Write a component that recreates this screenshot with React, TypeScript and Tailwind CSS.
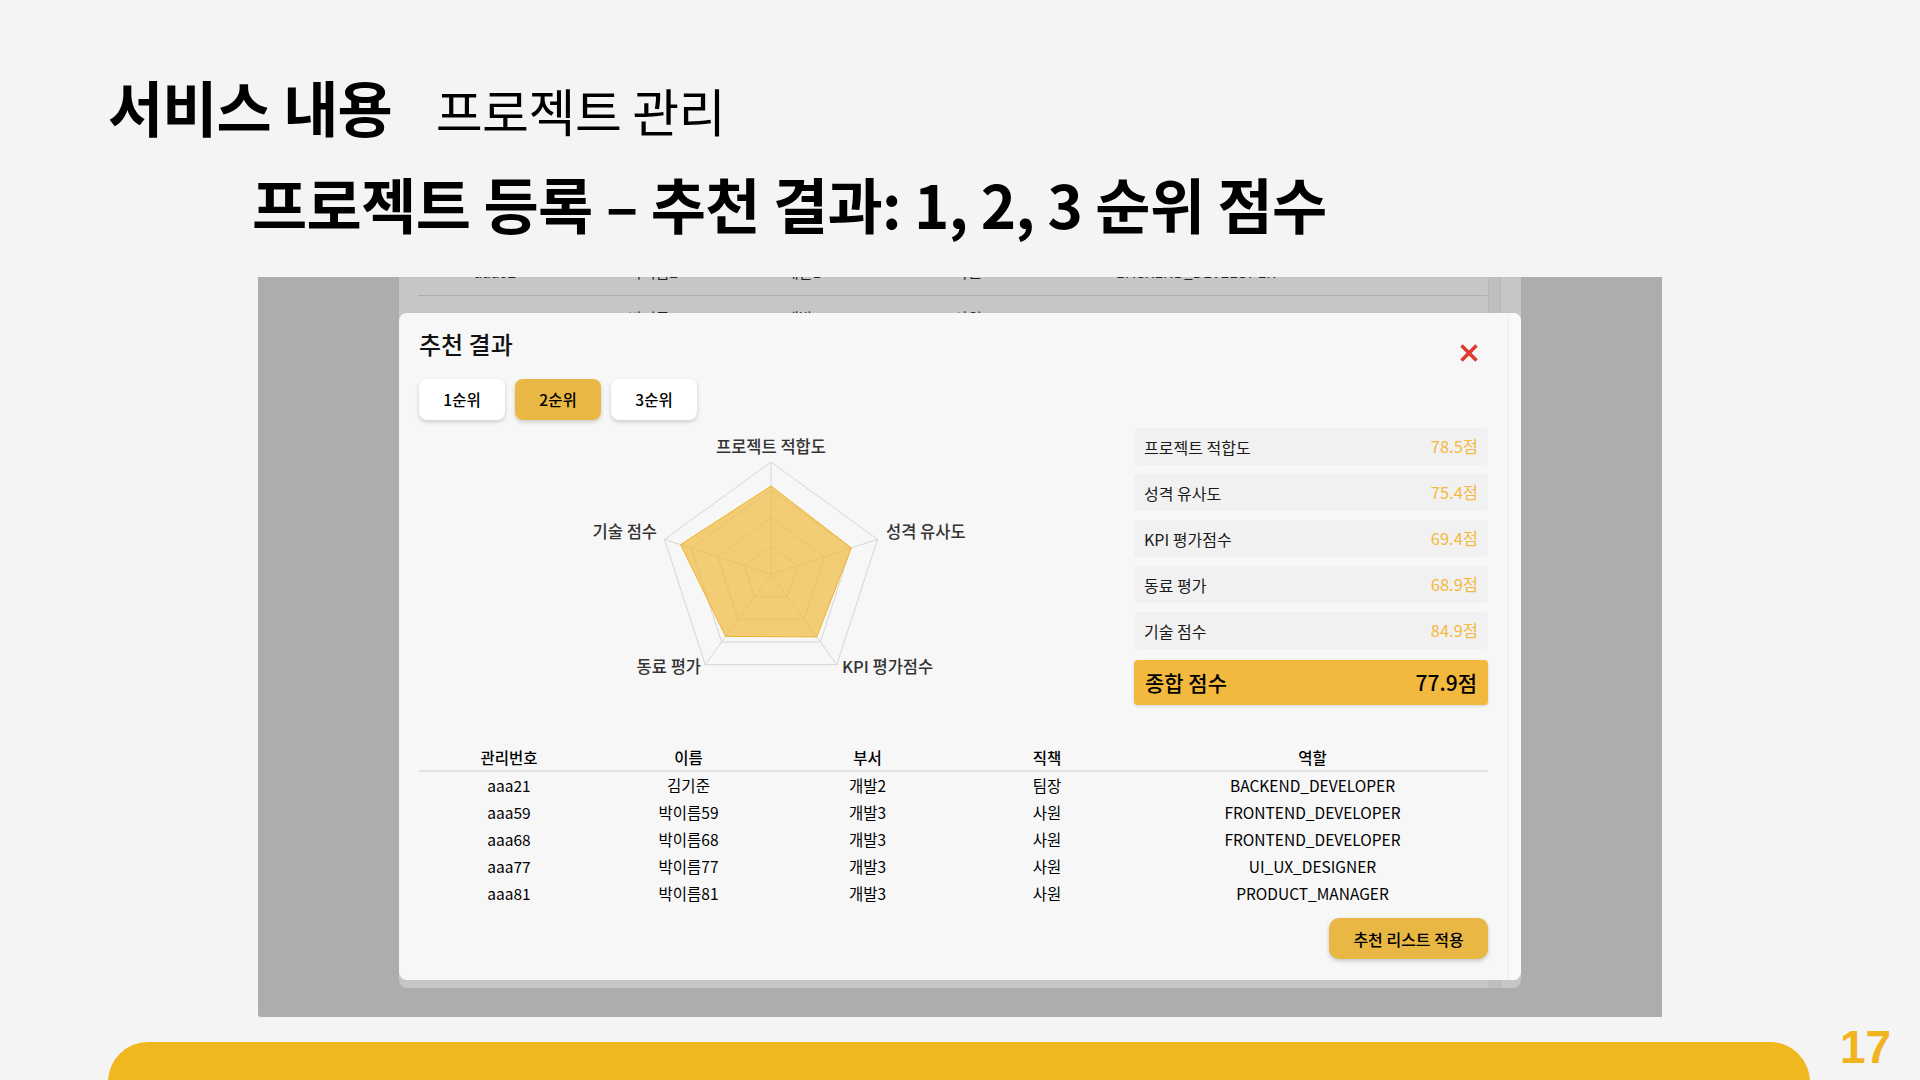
import React from 'react';

const axes = [
  { label: '프로젝트 적합도', value: 78.5 },
  { label: '성격 유사도', value: 75.4 },
  { label: 'KPI 평가점수', value: 69.4 },
  { label: '동료 평가', value: 68.9 },
  { label: '기술 점수', value: 84.9 },
];

const members = [
  { id: 'aaa21', name: '김기준', dept: '개발2', rank: '팀장', role: 'BACKEND_DEVELOPER' },
  { id: 'aaa59', name: '박이름59', dept: '개발3', rank: '사원', role: 'FRONTEND_DEVELOPER' },
  { id: 'aaa68', name: '박이름68', dept: '개발3', rank: '사원', role: 'FRONTEND_DEVELOPER' },
  { id: 'aaa77', name: '박이름77', dept: '개발3', rank: '사원', role: 'UI_UX_DESIGNER' },
  { id: 'aaa81', name: '박이름81', dept: '개발3', rank: '사원', role: 'PRODUCT_MANAGER' },
];

const CX = 352;
const CY = 146;
const R = 112;

const pt = (i: number, r: number) => {
  const a = ((-90 + 72 * i) * Math.PI) / 180;
  return [CX + r * Math.cos(a), CY + r * Math.sin(a)];
};

const ring = (f: number) =>
  [0, 1, 2, 3, 4].map((i) => pt(i, R * f).map((n) => n.toFixed(1)).join(',')).join(' ');

const RadarChart: React.FC = () => {
  const data = axes.map((a, i) => pt(i, (R * a.value) / 100).map((n) => n.toFixed(1)).join(',')).join(' ');
  // label anchors, tuned by eye
  const labels = [
    { x: 352, y: 18, anchor: 'middle' },
    { x: 467, y: 103, anchor: 'start' },
    { x: 423, y: 238, anchor: 'start' },
    { x: 282, y: 238, anchor: 'end' },
    { x: 238, y: 103, anchor: 'end' },
  ];
  return (
    <svg width="715" height="277" className="block shrink-0">
      {[0.25, 0.5, 0.75, 1].map((f) => (
        <polygon key={f} points={ring(f)} fill="none" stroke="#d6d6d6" strokeWidth="1" />
      ))}
      {[0, 1, 2, 3, 4].map((i) => {
        const [x, y] = pt(i, R);
        return <line key={i} x1={CX} y1={CY} x2={x} y2={y} stroke="#d6d6d6" strokeWidth="1" />;
      })}
      <polygon points={data} fill="#f0bb3f" fillOpacity="0.7" stroke="#f0b429" strokeWidth="1" />
      {axes.map((a, i) => (
        <text
          key={a.label}
          x={labels[i].x}
          y={labels[i].y}
          textAnchor={labels[i].anchor as any}
          dominantBaseline="central"
          fontSize="16.5"
          fontWeight="500"
          fill="#333"
          fontFamily="'Noto Sans CJK KR', 'Noto Sans', sans-serif"
        >
          {a.label}
        </text>
      ))}
    </svg>
  );
};

const App: React.FC = () => {
  return (
    <div className="w-[1920px] h-[1080px] bg-[#f4f4f4] overflow-hidden font-['Noto_Sans_CJK_KR','Noto_Sans',sans-serif] text-black">
      {/* slide heading */}
      <div className="pl-[108px] pt-[76px] flex items-baseline gap-[44px] leading-none">
        <h1 className="text-[60px] font-bold tracking-[-1px]">서비스 내용</h1>
        <span className="text-[51px] font-normal tracking-[-0.5px]">프로젝트 관리</span>
      </div>
      <h2 className="pl-[252px] mt-[37px] text-[60px] font-bold leading-none tracking-[-0.6px]">
        프로젝트 등록 – 추천 결과: 1, 2, 3 순위 점수
      </h2>

      {/* screenshot */}
      <div className="mt-[44px] ml-[258px] w-[1404px] h-[740px] bg-[#adadad] rounded-bl-[3px] overflow-hidden">
        <div className="ml-[141px] w-[1122px] h-[711px] bg-[#c6c6c6] rounded-b-lg relative overflow-hidden">
          {/* page behind the modal */}
          <div className="flex h-full">
            <div className="w-[1089px] pl-[19px] -mt-[27px]">
              {[
                ['aaa02', '박이름2', '개발1', '사원', 'BACKEND_DEVELOPER'],
                ['aaa03', '박이름3', '개발1', '사원', 'BACKEND_DEVELOPER'],
              ].map((r, i) => (
                <div key={i} className="grid grid-cols-[154px_162px_138px_192px_264px_1fr] items-center h-[46px] border-b border-[#aeaeae] w-[1069px] text-[15px] text-[#222]">
                  {r.map((c, j) => (
                    <div key={j} className="text-center">{c}</div>
                  ))}
                  <div className="pl-[92px]"><div className="w-[2px] h-[6px] bg-[#5b8fd6]" /></div>
                </div>
              ))}
            </div>
            <div className="w-[13px] h-full bg-[#bfbfbf] border-x border-[#b8b8b8]" />
            <div className="flex-1" />
          </div>

          {/* modal */}
          <div className="absolute top-[36px] left-0 w-[1122px] h-[667px] bg-[#f7f7f7] rounded-lg flex overflow-hidden">
            <div className="w-[1109px] px-[20px] pt-[15px]">
              <div className="flex justify-between items-start">
                <div className="text-[24px] leading-[31px] font-medium text-[#111]">추천 결과</div>
                <svg width="20" height="20" viewBox="0 0 20 20" className="mt-[15px] mr-[9px]">
                  <path d="M2.5 2.5 L17.5 17.5 M17.5 2.5 L2.5 17.5" stroke="#dc3b2e" strokeWidth="3.6" />
                </svg>
              </div>

              <div className="flex gap-[10px] mt-[16px]">
                {['1순위', '2순위', '3순위'].map((t, i) => (
                  <button
                    key={t}
                    className={`w-[86px] h-[41px] rounded-[8px] text-[15.5px] font-medium shadow-[0_2px_4px_rgba(0,0,0,0.18)] ${i === 1 ? 'bg-[#e8b744]' : 'bg-white'}`}
                  >
                    {t}
                  </button>
                ))}
              </div>

              <div className="flex mt-[8px]">
                <RadarChart />
                <div className="flex-1 flex flex-col gap-[9px]">
                  {axes.map((a) => (
                    <div key={a.label} className="h-[37px] bg-[#f1f1f1] rounded-[4px] flex items-center justify-between pl-[10px] pr-[10px] text-[16px]">
                      <span className="text-[#1a1a1a]">{a.label}</span>
                      <span className="text-[16.5px] text-[#f4b942]">{a.value}점</span>
                    </div>
                  ))}
                  <div className="mt-[2px] h-[45px] bg-[#f3b93e] rounded-[4px] flex items-center justify-between pl-[11px] pr-[11px] text-[21px] font-medium shadow-[0_1px_3px_rgba(0,0,0,0.15)]">
                    <span>종합 점수</span>
                    <span>77.9점</span>
                  </div>
                </div>
              </div>

              <div className="mt-[40px] text-[15.5px]">
                <div className="grid grid-cols-[180px_179px_179px_180px_1fr] h-[27px] items-center border-b-2 border-[#e2e2e2] font-medium">
                  {['관리번호', '이름', '부서', '직책', '역할'].map((h) => (
                    <div key={h} className="text-center">{h}</div>
                  ))}
                </div>
                {members.map((m) => (
                  <div key={m.id} className="grid grid-cols-[180px_179px_179px_180px_1fr] h-[27px] items-center">
                    <div className="text-center">{m.id}</div>
                    <div className="text-center">{m.name}</div>
                    <div className="text-center">{m.dept}</div>
                    <div className="text-center">{m.rank}</div>
                    <div className="text-center">{m.role}</div>
                  </div>
                ))}
              </div>

              <div className="flex justify-end mt-[11px]">
                <button className="w-[159px] h-[41px] rounded-[10px] bg-[#e8b744] text-[16px] font-medium shadow-[0_2px_4px_rgba(0,0,0,0.2)]">
                  추천 리스트 적용
                </button>
              </div>
            </div>
            <div className="w-[13px] h-full bg-[#f9f9f9] border-l border-[#ececec]" />
          </div>
        </div>
      </div>

      {/* footer */}
      <div className="flex items-start mt-[7px]">
        <div className="ml-[108px] mt-[18px] w-[1702px] h-[60px] bg-[#f0b71f] rounded-t-[40px]" />
        <div className="ml-[30px] text-[46px] font-bold leading-none text-[#f0b41e] font-['Liberation_Sans_Narrow','Liberation_Sans',sans-serif]">17</div>
      </div>
    </div>
  );
};

export default App;
